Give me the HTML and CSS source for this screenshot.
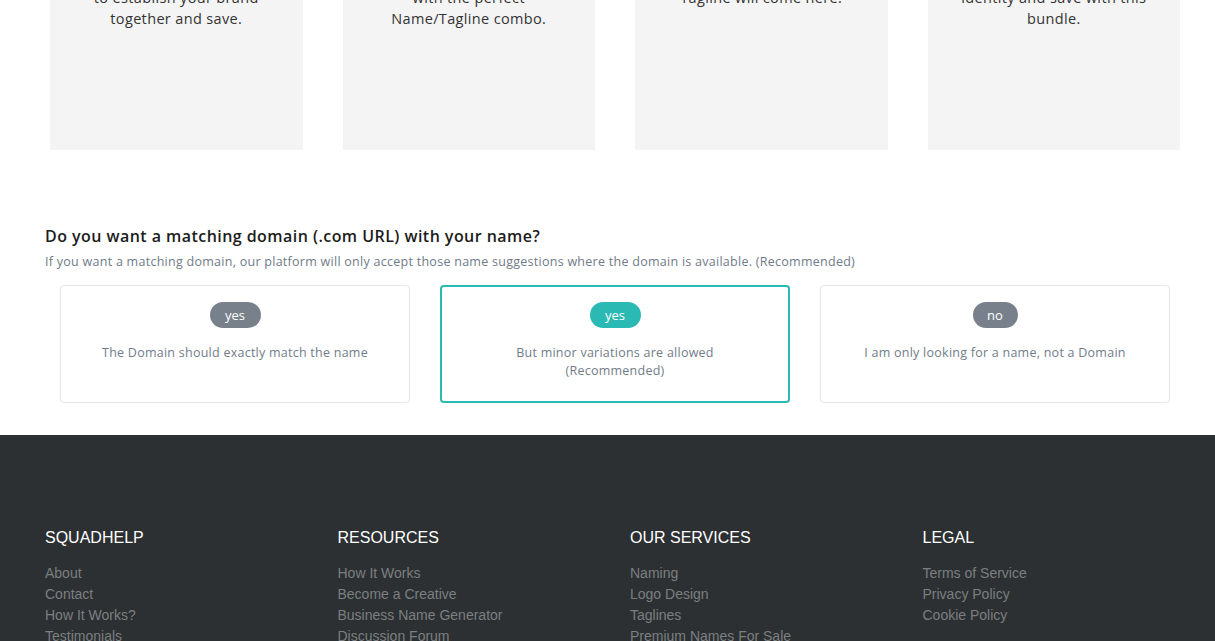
FILE: index.html
```html
<!DOCTYPE html>
<html lang="en">
<head>
<meta charset="utf-8">
<title>Squadhelp – Start a contest</title>
<link rel="stylesheet" href="styles.css">
</head>
<body>
<main class="page">
  <section class="bundles">
    <div class="bundle-card">
      <p class="bundle-text">Get a Name and Logo<br>to establish your brand<br>together and save.</p>
    </div>
    <div class="bundle-card">
      <p class="bundle-text">Get a great Name<br>with the perfect<br>Name/Tagline combo.</p>
    </div>
    <div class="bundle-card">
      <p class="bundle-text">Get a Logo and a<br>Tagline will come here.</p>
    </div>
    <div class="bundle-card">
      <p class="bundle-text">Get a complete brand<br>identity and save with this<br>bundle.</p>
    </div>
  </section>

  <section class="domain">
    <h2 class="domain-title">Do you want a matching domain (.com URL) with your name?</h2>
    <p class="domain-sub">If you want a matching domain, our platform will only accept those name suggestions where the domain is available. (Recommended)</p>
    <div class="options">
      <div class="option">
        <span class="badge">yes</span>
        <p class="option-text">The Domain should exactly match the name</p>
      </div>
      <div class="option option-selected">
        <span class="badge badge-teal">yes</span>
        <p class="option-text">But minor variations are allowed<br>(Recommended)</p>
      </div>
      <div class="option">
        <span class="badge badge-no">no</span>
        <p class="option-text">I am only looking for a name, not a Domain</p>
      </div>
    </div>
  </section>
</main>

<footer class="footer">
  <div class="footer-grid">
    <div class="footer-col">
      <h3 class="footer-title">SQUADHELP</h3>
      <ul class="footer-links">
        <li>About</li>
        <li>Contact</li>
        <li>How It Works?</li>
        <li>Testimonials</li>
      </ul>
    </div>
    <div class="footer-col">
      <h3 class="footer-title">RESOURCES</h3>
      <ul class="footer-links">
        <li>How It Works</li>
        <li>Become a Creative</li>
        <li>Business Name Generator</li>
        <li>Discussion Forum</li>
      </ul>
    </div>
    <div class="footer-col">
      <h3 class="footer-title">OUR SERVICES</h3>
      <ul class="footer-links">
        <li>Naming</li>
        <li>Logo Design</li>
        <li>Taglines</li>
        <li>Premium Names For Sale</li>
      </ul>
    </div>
    <div class="footer-col">
      <h3 class="footer-title">LEGAL</h3>
      <ul class="footer-links">
        <li>Terms of Service</li>
        <li>Privacy Policy</li>
        <li>Cookie Policy</li>
      </ul>
    </div>
  </div>
</footer>
</body>
</html>
```

FILE: styles.css
```css
* { box-sizing: border-box; }

html, body {
  margin: 0;
  padding: 0;
  background: #ffffff;
}

body {
  font-family: "Open Sans", "Noto Sans", sans-serif;
  overflow: hidden;
}

.page {
  padding: 0 35px 32px 45px;
}

.bundles {
  display: flex;
  gap: 40px;
  margin-top: -120px;
  padding-left: 5px;
}

.bundle-card {
  width: 252.5px;
  height: 270px;
  background: #f4f4f4;
  padding: 86px 8px 0;
}

.bundle-text {
  margin: 0;
  text-align: center;
  font-size: 14.5px;
  line-height: 21px;
  letter-spacing: 0.35px;
  color: #333333;
}

.domain {
  margin-top: 74px;
}

.domain-title {
  margin: 0;
  font-size: 16px;
  line-height: 24px;
  font-weight: 600;
  letter-spacing: 0.45px;
  color: #1c1c1c;
}

.domain-sub {
  margin: 4px 0 0;
  font-size: 12.5px;
  line-height: 20px;
  letter-spacing: 0.27px;
  color: #6f7b88;
}

.options {
  display: flex;
  gap: 30px;
  margin-top: 13px;
  padding-left: 15px;
}

.option {
  width: 350px;
  height: 118px;
  border: 1px solid #e6e6ef;
  border-radius: 4px;
  padding-top: 16px;
  display: flex;
  flex-direction: column;
  align-items: center;
}

.option-selected {
  border: 2px solid #2bb9b4;
  padding-top: 15px;
}

.badge {
  display: inline-block;
  height: 26px;
  line-height: 26px;
  padding: 0 12px;
  min-width: 45px;
  text-align: center;
  border-radius: 13px;
  background: #78818b;
  color: #ffffff;
  font-size: 13px;
}

.badge-teal {
  background: #2bb9b4;
  min-width: 51px;
}

.option .badge:not(.badge-no) {
  min-width: 51px;
}

.option-text {
  margin: 16px 0 0;
  text-align: center;
  font-size: 12.5px;
  line-height: 18px;
  letter-spacing: 0.25px;
  color: #717c89;
}

.footer {
  background: #2c3032;
  padding: 94px 0 40px 45px;
}

.footer-grid {
  display: grid;
  grid-template-columns: repeat(4, 292.5px);
}

.footer-title {
  margin: 0;
  font-family: "Liberation Sans", Arial, sans-serif;
  font-size: 16px;
  line-height: 18px;
  font-weight: 400;
  color: #ffffff;
}

.footer-links {
  list-style: none;
  margin: 16px 0 0;
  padding: 0;
  font-family: "Liberation Sans", Arial, sans-serif;
  font-size: 14px;
  line-height: 21px;
  color: #7b7f81;
}
```
